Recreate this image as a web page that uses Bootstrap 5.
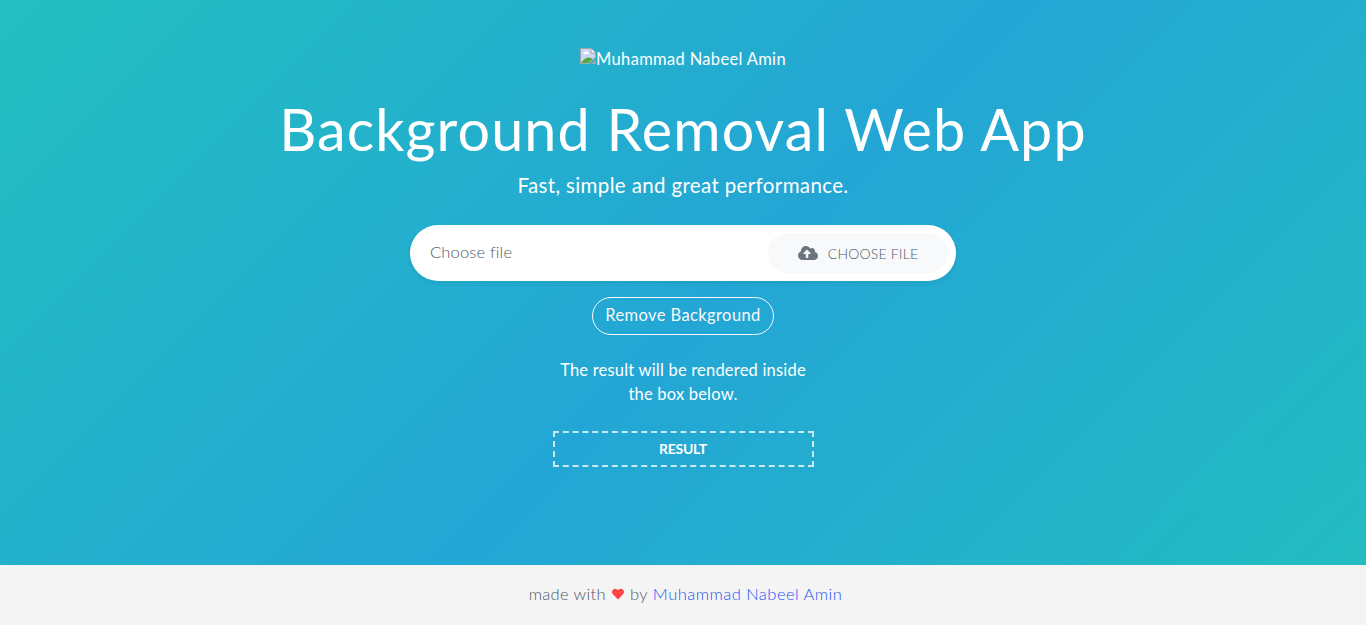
<!DOCTYPE html>
<html lang="en">
<head>
<meta charset="utf-8">
<meta name="viewport" content="width=device-width, initial-scale=1">
<title>Background Removal Web App</title>
<link href="https://cdn.jsdelivr.net/npm/bootstrap@5.3.0/dist/css/bootstrap.min.css" rel="stylesheet">
<style>
html, body { height: 100%; }
body { font-family: Lato, "Open Sans", sans-serif; background: linear-gradient(135deg, #23bfc0 0%, #23a6d5 51%, #23bec0 100%); overflow: hidden; }
.author { font-size: 16.5px; line-height: 22px; height: 24px; letter-spacing: .33px; }
.app-title { font-size: 57.5px; line-height: 67px; letter-spacing: 1.1px; margin: 23px 0 9px; white-space: nowrap; }
.app-sub { font-size: 20.5px; line-height: 28px; padding-bottom: 2px; letter-spacing: .36px; }
.upload-bar { width: 546px; height: 56px; padding: 8px 8px 8px 20px; }
.upload-label { font-size: 16.5px; font-weight: 300; color: #4f5963; letter-spacing: .17px; padding-bottom: 2px; }
.upload-btn { width: 180px; height: 40px; font-size: 14px; font-weight: 300; letter-spacing: .2px; color: #4f5963; background: #f8f9fa; gap: 10px; }
.upload-btn svg { color: #6c757d; }
.remove-btn { font-size: 16.5px; width: 182px; height: 38px; padding: 0 0 2px; white-space: nowrap; letter-spacing: .4px; }
.note { font-size: 16.5px; width: 260px; line-height: 24px; letter-spacing: .2px; margin: 23px 0 25px; white-space: nowrap; }
.result-area { width: 261px; height: 36px; padding-bottom: 2px; border: 2px dashed rgba(255,255,255,.75); font-size: 14px; letter-spacing: -.25px; }
.site-footer { font-size: 16.5px; height: 60px; background: #f4f4f4; color: #4f5963; padding: 0 0 2px 5px; font-weight: 300; letter-spacing: .35px; gap: 5px; }
.site-footer a { color: #1f52f5; letter-spacing: .48px; }
</style>
</head>
<body class="d-flex flex-column">
<main class="flex-grow-1 d-flex flex-column align-items-center text-white text-center pt-5">
  <div class="author d-flex align-items-start">
    <svg width="16" height="16" viewBox="0 0 16 16" aria-hidden="true">
      <path d="M0 0H11L16 5V10L9 16H0Z" fill="#a7a7a7"/>
      <path d="M1 1H10.5L15 5.5V9.5L8 15H1Z" fill="#c6d8f5"/>
      <path d="M3 6Q3 4 5 4Q6 2 7.5 4Q9 4 9 6Z" fill="#fff"/>
      <path d="M1 15Q6 8 11 10L13 11L8 15Z" fill="#55a93a"/>
      <path d="M11 0V5H16Z" fill="#fff" stroke="#a0a0a0"/>
      <path d="M16 12V16H11Z" fill="#a7a7a7"/>
    </svg><span>Muhammad Nabeel Amin</span>
  </div>
  <h1 class="app-title fw-normal">Background Removal Web App</h1>
  <p class="app-sub mb-4">Fast, simple and great performance.</p>
  <div class="upload-bar bg-white rounded-pill shadow-sm d-flex align-items-center justify-content-between">
    <label class="upload-label" for="upload">Choose file</label>
    <button id="upload" type="button" class="upload-btn btn rounded-pill border-0 p-0 d-flex align-items-center justify-content-center">
      <svg width="20" height="16" viewBox="0 0 640 512" fill="currentColor" aria-hidden="true"><path d="M537.600 226.600c4.100-10.700 6.400-22.400 6.400-34.600 0-53-43-96-96-96-19.700 0-38.100 6-53.300 16.200C367 64.200 315.300 32 256 32c-88.400 0-160 71.600-160 160 0 2.700.1 5.400.2 8.100C40.200 219.800 0 273.200 0 336c0 79.500 64.500 144 144 144h368c70.700 0 128-57.300 128-128 0-61.900-44-113.600-102.400-125.400zM393.400 288H328v112c0 8.800-7.200 16-16 16h-48c-8.800 0-16-7.200-16-16V288h-65.400c-14.300 0-21.400-17.200-11.300-27.300l105.400-105.400c6.200-6.200 16.400-6.200 22.600 0l105.400 105.400c10.100 10.100 2.900 27.300-11.300 27.300z"/></svg>
      <span>CHOOSE FILE</span>
    </button>
  </div>
  <button type="button" class="remove-btn btn btn-outline-light rounded-pill mt-3">Remove Background</button>
  <p class="note">The result will be rendered inside<br>the box below.</p>
  <div class="result-area fw-bold d-flex align-items-center justify-content-center">RESULT</div>
</main>
<footer class="site-footer d-flex align-items-center justify-content-center">
  <span>made with</span>
  <svg width="14" height="12" viewBox="-43 32 598 450" fill="#ff4646" aria-hidden="true"><path d="M462.300 62.600C407.500 15.900 326 24.300 275.700 76.200L256 96.500l-19.700-20.300C186.100 24.300 104.500 15.900 49.700 62.600c-62.800 53.600-66.100 149.800-9.900 207.900l193.500 199.800c12.500 12.900 32.800 12.900 45.300 0l193.500-199.800c56.300-58.100 53-154.300-9.800-207.900z"/></svg>
  <span>by</span>
  <a href="#" class="text-decoration-none">Muhammad Nabeel Amin</a>
</footer>
</body>
</html>
